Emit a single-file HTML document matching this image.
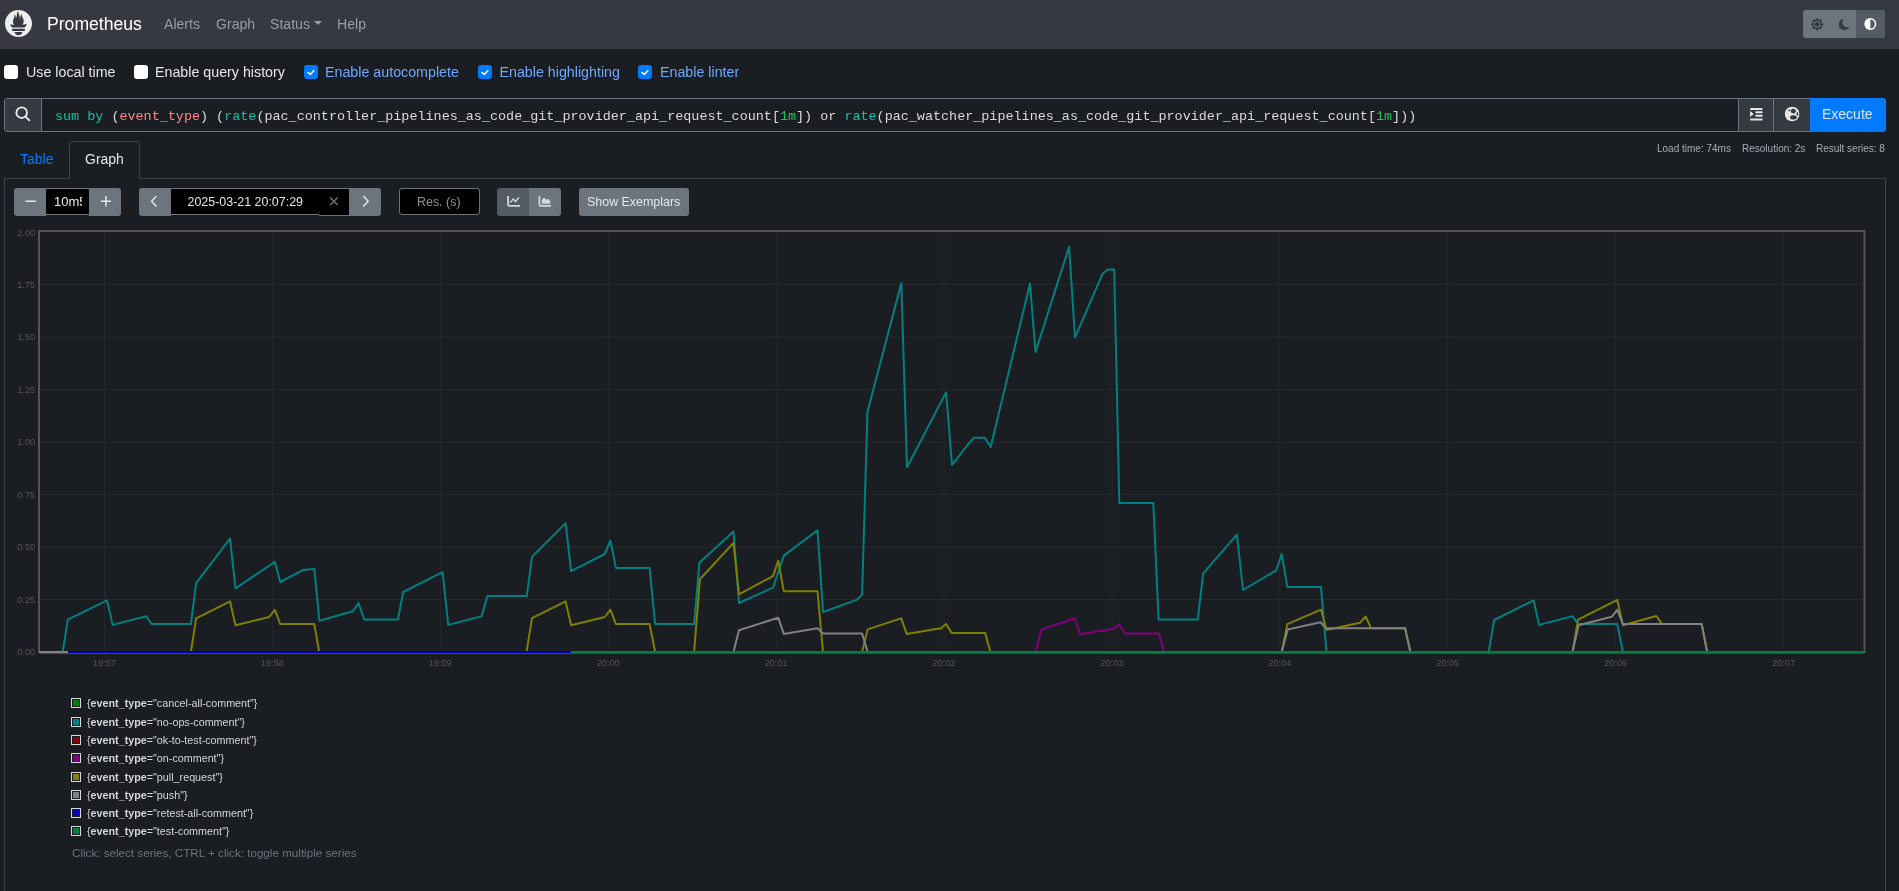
<!DOCTYPE html>
<html><head><meta charset="utf-8">
<style>
*{box-sizing:border-box;margin:0;padding:0}
html,body{width:1899px;height:891px;overflow:hidden}
body{will-change:transform;background:#1a1d21;font-family:"Liberation Sans",sans-serif;color:#e4e6e8;position:relative}
.abs{position:absolute}
#nav{left:0;top:0;width:1899px;height:49px;background:#363942}
.brand{left:47px;top:13px;font-size:17.6px;color:#fff;line-height:22px;white-space:nowrap}
.nl{top:15px;font-size:14.1px;line-height:18px;color:#9a9da1;white-space:nowrap}
.cb{width:14px;height:14px;border-radius:3px;background:#fff}
.cbc{background:#007bff}
.lbl{top:64px;font-size:14.25px;line-height:16px;white-space:nowrap;color:#e4e6e8}
.lblb{color:#6ea8fe}
.qbox{left:4px;top:98px;width:1882px;height:34px;border:1px solid #6c757d;border-radius:3px;overflow:hidden}
.qtext{left:55px;top:109px;font-family:"Liberation Mono",monospace;font-size:13.43px;line-height:16px;color:#dadada;white-space:pre}
.kw{color:#14bfad}.ln{color:#ff8585}.nm{color:#22c55e}
.tabtxt{top:151px;font-size:14px;line-height:16px;white-space:nowrap}
.stat{top:143px;font-size:10px;line-height:12px;color:#a6acb4;white-space:nowrap}
.btn{background:#6c757d;height:28px;top:188px}
.inp{background:#000;top:188px;height:27px;border:1px solid #6c757d}
.ctl{font-size:12.45px;line-height:14px;white-space:nowrap}
.yl{left:0;width:35px;text-align:right;font-size:9.1px;line-height:12px;color:#555}
.xl{top:657px;width:40px;text-align:center;font-size:9.1px;line-height:12px;color:#555}
.sw{left:71px;width:10px;height:10px;border:1px solid #d9d9d9;padding:1px;background:#1a1d21}
.sw div{width:6px;height:6px}
.lg{left:87px;font-size:10.75px;line-height:14px;color:#d4d6d8;white-space:nowrap}
.lg b{font-weight:bold}
</style></head>
<body>
<div id="nav" class="abs">
  <svg class="abs" style="left:5px;top:10px" width="27" height="27" viewBox="0 0 24 24">
    <path fill="#eeeeee" d="M12 0C5.373 0 0 5.372 0 12c0 6.627 5.373 12 12 12s12-5.373 12-12c0-6.628-5.373-12-12-12zm0 22.46c-1.885 0-3.414-1.26-3.414-2.814h6.828c0 1.553-1.528 2.813-3.414 2.813zm5.64-3.745H6.36v-2.046h11.28v2.046zm-.04-3.098H6.391c-.037-.043-.075-.086-.111-.13-1.155-1.401-1.427-2.133-1.69-2.879-.005-.025 1.4.287 2.395.511 0 0 .513.119 1.262.255-.72-.843-1.147-1.915-1.147-3.01 0-2.406 1.845-4.508 1.18-6.419.648.053 1.34 1.367 1.387 3.422.689-.951.977-2.69.977-3.755 0-1.103.727-2.385 1.454-2.429-.648 1.069.168 1.984.894 4.256.272.854.237 2.29.447 3.201.07-1.892.395-4.652 1.595-5.605-.529 1.2.079 2.702.494 3.424.671 1.164 1.078 2.047 1.078 3.716a4.642 4.642 0 01-1.11 2.996c.792-.149 1.34-.283 1.34-.283l2.573-.502s-.374 1.538-1.81 3.019z"/>
  </svg>
  <div class="abs brand">Prometheus</div>
  <div class="abs nl" style="left:164px">Alerts</div>
  <div class="abs nl" style="left:216px">Graph</div>
  <div class="abs nl" style="left:270px">Status</div>
  <div class="abs" style="left:314px;top:21px;width:0;height:0;border-left:4.1px solid transparent;border-right:4.1px solid transparent;border-top:4.2px solid #9a9da1"></div>
  <div class="abs nl" style="left:337px">Help</div>
  <div class="abs" style="left:1803px;top:10px;width:82px;height:28px;border-radius:3px;overflow:hidden;background:#6c757d">
    <div class="abs" style="left:53px;top:0;width:29px;height:28px;background:#545b62"></div>
    <svg class="abs" style="left:0;top:0" width="82" height="28" viewBox="0 0 82 28">
      <g fill="#343a40" transform="translate(14.2,14.3)">
        <polygon points="0,-6.6 1.8,-4.3 4.7,-4.7 4.3,-1.8 6.6,0 4.3,1.8 4.7,4.7 1.8,4.3 0,6.6 -1.8,4.3 -4.7,4.7 -4.3,1.8 -6.6,0 -4.3,-1.8 -4.7,-4.7 -1.8,-4.3"/>
        <circle r="3.4" fill="#6c757d"/><circle r="2.4" fill="#343a40"/>
      </g>
      <path fill="#343a40" d="M40.91,9.01 A5.4,5.4 0 1 0 46.18,16.50 A4.6,4.6 0 0 1 40.91,9.01 Z"/>
      <g transform="translate(67.3,14)">
        <circle r="6" fill="#fff"/><path d="M0,-4.6 A4.6,4.6 0 0 1 0,4.6 Z" fill="#545b62"/>
      </g>
    </svg>
  </div>
</div>

<div class="abs cb" style="left:4px;top:65px"></div>
<div class="abs lbl" style="left:26px">Use local time</div>
<div class="abs cb" style="left:134px;top:65px"></div>
<div class="abs lbl" style="left:155px">Enable query history</div>
<div class="abs cb cbc" style="left:304px;top:65px"></div>
<div class="abs lbl lblb" style="left:325px">Enable autocomplete</div>
<div class="abs cb cbc" style="left:478px;top:65px"></div>
<div class="abs lbl lblb" style="left:499.5px">Enable highlighting</div>
<div class="abs cb cbc" style="left:638px;top:65px"></div>
<div class="abs lbl lblb" style="left:660px">Enable linter</div>
<svg class="abs" style="left:0;top:60px" width="700" height="24" viewBox="0 60 700 24">
  <g fill="none" stroke="#fff" stroke-width="1.5" stroke-linecap="round" stroke-linejoin="round">
    <path d="M308,72.5 L310.3,74.4 L313.9,70.5"/>
    <path d="M482,72.5 L484.3,74.4 L487.9,70.5"/>
    <path d="M642,72.5 L644.3,74.4 L647.9,70.5"/>
  </g>
</svg>

<!-- query box -->
<div class="abs qbox">
  <div class="abs" style="left:0;top:0;width:37px;height:32px;background:#343a40;border-right:1px solid #6c757d"></div>
  <div class="abs" style="left:1733px;top:0;width:36px;height:32px;background:#343a40;border-left:1px solid #6c757d"></div>
  <div class="abs" style="left:1768px;top:0;width:37px;height:32px;background:#343a40;border-left:1px solid #6c757d"></div>
</div>
<div class="abs" style="left:1810px;top:98px;width:76px;height:34px;background:#007bff;border-radius:0 4px 4px 0"></div>
<div class="abs" style="left:1822px;top:106px;font-size:14px;line-height:16px;color:#dfe4ea">Execute</div>
<svg class="abs" style="left:0;top:95px" width="1899" height="40" viewBox="0 95 1899 40">
  <g fill="none" stroke="#e8eaec" stroke-width="1.9"><circle cx="21.7" cy="112.7" r="5.3"/><path d="M25.6,116.6 L29.3,120.3" stroke-linecap="round"/></g>
  <g fill="#e6e6e6">
    <rect x="1750" y="107.9" width="12.6" height="2" rx="1"/>
    <rect x="1755.2" y="111.2" width="7.6" height="2" rx="1"/>
    <rect x="1755.2" y="114.8" width="7.6" height="2" rx="1"/>
    <rect x="1750" y="118.6" width="12.6" height="2" rx="1"/>
    <polygon points="1750,111 1753.8,114.05 1750,117.1"/>
  </g>
  <g>
    <circle cx="1792.1" cy="114" r="7.3" fill="#e6e6e6"/>
    <ellipse cx="1793.4" cy="117.4" rx="3.3" ry="2.1" fill="#343a40"/>
    <polygon points="1790.6,110.2 1792.8,108.5 1795.4,109.4 1796.1,111.6 1794.2,113.6 1791.4,113.1" fill="#343a40"/>
    <circle cx="1789.4" cy="110.4" r="0.9" fill="#343a40"/>
    <ellipse cx="1797.4" cy="113.9" rx="0.9" ry="1.8" fill="#343a40"/>
  </g>
</svg>
<div class="abs qtext"><span class="kw">sum</span> <span class="kw">by</span> (<span class="ln">event_type</span>) (<span class="kw">rate</span>(pac_controller_pipelines_as_code_git_provider_api_request_count[<span class="nm">1m</span>]) or <span class="kw">rate</span>(pac_watcher_pipelines_as_code_git_provider_api_request_count[<span class="nm">1m</span>]))</div>

<!-- tabs -->
<div class="abs" style="left:4px;top:178px;width:1882px;height:720px;border:1px solid #3d4248;border-bottom:none"></div>
<div class="abs" style="left:69px;top:141px;width:71px;height:38px;border:1px solid #3d4248;border-bottom:none;border-radius:4px 4px 0 0;background:#1a1d21"></div>
<div class="abs tabtxt" style="left:20px;color:#007bff">Table</div>
<div class="abs tabtxt" style="left:85px;color:#e4e6e8">Graph</div>
<div class="abs stat" style="left:1657px">Load time: 74ms</div>
<div class="abs stat" style="left:1742px">Resolution: 2s</div>
<div class="abs stat" style="left:1816px">Result series: 8</div>

<!-- controls -->
<div class="abs btn" style="left:14px;width:32px;border-radius:3px 0 0 3px"></div>
<div class="abs" style="left:46px;top:188px;width:43px;height:27px;background:#000;border-top:1px solid #6c757d;border-bottom:1px solid #6c757d"></div>
<div class="abs" style="left:46px;top:188px;width:36px;height:27px;overflow:hidden"><div class="abs ctl" style="left:8px;top:7px;color:#eee;font-size:13px">10m53s</div></div>
<div class="abs btn" style="left:89px;width:32px;border-radius:0 3px 3px 0"></div>
<div class="abs btn" style="left:139px;width:32px;border-radius:3px 0 0 3px"></div>
<div class="abs" style="left:171px;top:188px;width:178px;height:27px;background:#000;border-top:1px solid #6c757d"></div>
<div class="abs" style="left:171px;top:214px;width:148px;height:1px;background:#6c757d"></div>
<div class="abs" style="left:319px;top:215px;width:30px;height:1px;background:#6c757d"></div>
<div class="abs btn" style="left:349px;width:32px;border-radius:0 3px 3px 0"></div>
<div class="abs ctl" style="left:187.5px;top:195px;color:#e4e6e8">2025-03-21 20:07:29</div>
<div class="abs inp" style="left:399px;width:81px;border-radius:3px"></div>
<div class="abs ctl" style="left:417px;top:195px;color:#8e9296">Res. (s)</div>
<div class="abs btn" style="left:497px;width:32px;border-radius:3px 0 0 3px;background:#545b62"></div>
<div class="abs btn" style="left:529px;width:32px;border-radius:0 3px 3px 0"></div>
<div class="abs btn" style="left:579px;width:110px;border-radius:3px"></div>
<div class="abs ctl" style="left:587px;top:195px;color:#e4e6e8">Show Exemplars</div>
<svg class="abs" style="left:0;top:185px" width="700" height="34" viewBox="0 185 700 34">
  <g stroke="#e6e6e6" stroke-width="1.5" fill="none">
    <path d="M25.5,201.2 H35.8"/>
    <path d="M100.8,201.2 H111 M105.9,196 V206.4"/>
    <path d="M156.4,195.9 L151.6,201.2 L156.4,206.5" />
    <path d="M363.3,195.9 L368.1,201.2 L363.3,206.5" />
    <path d="M330.2,197.6 L337.6,205 M337.6,197.6 L330.2,205" stroke="#6c757d" stroke-width="1.4"/>
    <path d="M508.1,196 V204.6 q0,1.3 1.3,1.3 H520" stroke-width="1.8" stroke="#d3d6da"/>
    <path d="M510.1,202.6 L513.4,198.9 L515.3,201.6 L519,197.6" stroke-width="1.4" stroke="#d3d6da"/>
    <path d="M539.4,196 V204.6 q0,1.3 1.3,1.3 H551" stroke-width="1.8" stroke="#d3d6da"/>
  </g>
  <path fill="#d3d6da" d="M541.8,203.8 V200.3 Q542.5,198.5 543.9,197.8 Q545,198.3 546.3,199.8 Q547.3,198.8 548.2,198.9 Q549.8,199.7 550.3,201.2 V203.8 Z"/>
</svg>

<svg class="abs" style="left:0;top:0" width="1899" height="891" viewBox="0 0 1899 891">
<line x1="104.5" y1="232" x2="104.5" y2="651" stroke="#26292d" stroke-width="1"/>
<line x1="272.4" y1="232" x2="272.4" y2="651" stroke="#26292d" stroke-width="1"/>
<line x1="440.3" y1="232" x2="440.3" y2="651" stroke="#26292d" stroke-width="1"/>
<line x1="608.2" y1="232" x2="608.2" y2="651" stroke="#26292d" stroke-width="1"/>
<line x1="776.1" y1="232" x2="776.1" y2="651" stroke="#26292d" stroke-width="1"/>
<line x1="944.0" y1="232" x2="944.0" y2="651" stroke="#26292d" stroke-width="1"/>
<line x1="1112.0" y1="232" x2="1112.0" y2="651" stroke="#26292d" stroke-width="1"/>
<line x1="1279.9" y1="232" x2="1279.9" y2="651" stroke="#26292d" stroke-width="1"/>
<line x1="1447.8" y1="232" x2="1447.8" y2="651" stroke="#26292d" stroke-width="1"/>
<line x1="1615.7" y1="232" x2="1615.7" y2="651" stroke="#26292d" stroke-width="1"/>
<line x1="1783.6" y1="232" x2="1783.6" y2="651" stroke="#26292d" stroke-width="1"/>
<line x1="40" y1="599.6" x2="1863" y2="599.6" stroke="#26292d" stroke-width="1"/>
<line x1="40" y1="547.1" x2="1863" y2="547.1" stroke="#26292d" stroke-width="1"/>
<line x1="40" y1="494.6" x2="1863" y2="494.6" stroke="#26292d" stroke-width="1"/>
<line x1="40" y1="442.1" x2="1863" y2="442.1" stroke="#26292d" stroke-width="1"/>
<line x1="40" y1="389.6" x2="1863" y2="389.6" stroke="#26292d" stroke-width="1"/>
<line x1="40" y1="337.1" x2="1863" y2="337.1" stroke="#26292d" stroke-width="1"/>
<line x1="40" y1="284.6" x2="1863" y2="284.6" stroke="#26292d" stroke-width="1"/>
<rect x="39" y="231" width="1825.5" height="421" fill="none" stroke="#545454" stroke-width="2"/>
<line x1="40" y1="653.5" x2="1864" y2="653.5" stroke="#4a4548" stroke-width="1"/>
<polyline points="39.0,652.0 62.7,652.0 67.8,619.6 107.0,600.3 112.6,624.9 146.1,616.2 151.7,624.1 190.9,624.1 196.1,583.2 230.0,538.6 235.5,588.3 274.8,561.9 280.3,582.0 302.8,570.1 314.3,569.0 319.4,620.7 352.9,611.3 358.5,603.0 364.3,619.6 397.9,619.6 403.2,592.0 442.6,572.2 448.2,624.9 481.7,616.2 487.3,595.9 526.8,595.9 532.0,556.8 565.6,523.1 571.1,571.1 604.8,554.0 610.4,540.5 615.9,567.9 649.6,567.9 655.1,624.1 694.1,624.1 699.4,562.7 733.5,531.5 739.0,603.0 773.0,587.7 783.8,555.6 817.5,530.2 823.0,612.0 856.6,599.9 862.1,594.8 867.4,412.1 901.3,283.0 907.0,467.3 946.1,392.4 952.0,464.8 968.8,443.3 973.9,437.7 984.8,437.7 990.7,447.1 1030.0,283.5 1035.5,352.1 1069.1,246.8 1075.0,337.3 1102.4,274.1 1107.8,269.5 1114.2,269.5 1119.3,503.1 1153.3,503.1 1158.6,619.6 1197.7,619.6 1203.2,573.4 1236.9,534.7 1243.0,590.0 1276.2,570.3 1281.7,554.0 1287.3,586.9 1321.0,586.9 1326.5,652.0 1488.7,652.0 1494.2,620.0 1533.6,600.3 1539.0,624.9 1572.5,616.2 1578.1,624.1 1617.3,624.1 1622.9,652.0 1864.5,652.0" stroke="#008080" fill="none" stroke-width="2" stroke-linejoin="round" stroke-linecap="butt"/>
<polyline points="39.0,652.0 1035.8,652.0 1041.4,629.4 1074.6,618.5 1080.1,634.2 1113.8,628.7 1119.4,624.4 1124.9,633.4 1158.9,633.4 1164.0,652.0 1864.5,652.0" stroke="#800080" fill="none" stroke-width="2" stroke-linejoin="round" stroke-linecap="butt"/>
<polyline points="39.0,652.0 190.9,652.0 196.1,618.4 230.0,601.4 235.5,625.2 269.2,617.0 274.8,609.8 280.3,624.1 314.3,624.1 319.1,652.0 526.5,652.0 532.0,618.1 565.6,601.4 571.1,625.2 604.8,617.0 610.4,609.7 615.9,624.1 649.6,624.1 655.1,652.0 694.1,652.0 699.9,579.3 733.5,542.9 739.0,594.3 773.0,576.1 778.2,560.8 783.8,591.2 817.5,591.2 823.0,652.0 862.1,652.0 867.6,629.4 901.2,618.4 906.7,633.9 939.0,628.5 940.5,628.7 946.1,623.9 951.7,633.1 985.2,633.1 990.4,652.0 1281.7,652.0 1287.3,624.1 1321.0,609.7 1326.5,629.9 1360.0,622.8 1365.6,616.5 1371.1,628.3 1405.1,628.3 1410.4,652.0 1572.5,652.0 1578.1,619.6 1617.3,599.9 1622.9,625.2 1656.4,616.0 1662.0,624.1 1701.7,624.1 1707.2,652.0 1864.5,652.0" stroke="#808000" fill="none" stroke-width="2" stroke-linejoin="round" stroke-linecap="butt"/>
<polyline points="39.0,652.0 733.5,652.0 739.0,630.2 778.2,617.7 783.8,633.9 817.5,628.3 823.0,633.4 862.1,633.4 867.6,652.0 1281.7,652.0 1287.7,629.4 1320.5,622.3 1326.0,628.3 1405.1,628.3 1410.4,652.0 1572.5,652.0 1578.6,625.2 1611.8,616.8 1617.3,609.7 1622.9,624.1 1701.7,624.1 1707.2,652.0 1864.5,652.0" stroke="#808080" fill="none" stroke-width="2" stroke-linejoin="round" stroke-linecap="butt"/>
<line x1="40" y1="651.5" x2="68" y2="651.5" stroke="#86866c" stroke-width="1"/>
<line x1="40" y1="653.5" x2="68" y2="653.5" stroke="#3d5252" stroke-width="1"/>
<polyline points="68.0,652.0 571.1,652.0" stroke="#0000c0" fill="none" stroke-width="2" stroke-linejoin="round" stroke-linecap="butt"/>
<polyline points="571.1,652.0 1864.5,652.0" stroke="#008040" fill="none" stroke-width="2" stroke-linejoin="round" stroke-linecap="butt"/>
</svg>
<div class="abs yl" style="top:646.0px">0.00</div>
<div class="abs yl" style="top:593.6px">0.25</div>
<div class="abs yl" style="top:541.1px">0.50</div>
<div class="abs yl" style="top:488.7px">0.75</div>
<div class="abs yl" style="top:436.2px">1.00</div>
<div class="abs yl" style="top:383.8px">1.25</div>
<div class="abs yl" style="top:331.4px">1.50</div>
<div class="abs yl" style="top:278.9px">1.75</div>
<div class="abs yl" style="top:226.5px">2.00</div>
<div class="abs xl" style="left:84.5px">19:57</div>
<div class="abs xl" style="left:252.4px">19:58</div>
<div class="abs xl" style="left:420.3px">19:59</div>
<div class="abs xl" style="left:588.2px">20:00</div>
<div class="abs xl" style="left:756.1px">20:01</div>
<div class="abs xl" style="left:924.0px">20:02</div>
<div class="abs xl" style="left:1092.0px">20:03</div>
<div class="abs xl" style="left:1259.9px">20:04</div>
<div class="abs xl" style="left:1427.8px">20:05</div>
<div class="abs xl" style="left:1595.7px">20:06</div>
<div class="abs xl" style="left:1763.6px">20:07</div>
<div class="abs sw" style="top:698.1px"><div style="background:#008000"></div></div>
<div class="abs lg" style="top:696.1px">{<b>event_type</b>="cancel-all-comment"}</div>
<div class="abs sw" style="top:717.3px"><div style="background:#008080"></div></div>
<div class="abs lg" style="top:715.3px">{<b>event_type</b>="no-ops-comment"}</div>
<div class="abs sw" style="top:735.1px"><div style="background:#800000"></div></div>
<div class="abs lg" style="top:733.1px">{<b>event_type</b>="ok-to-test-comment"}</div>
<div class="abs sw" style="top:753.3px"><div style="background:#800080"></div></div>
<div class="abs lg" style="top:751.3px">{<b>event_type</b>="on-comment"}</div>
<div class="abs sw" style="top:771.5px"><div style="background:#808000"></div></div>
<div class="abs lg" style="top:769.5px">{<b>event_type</b>="pull_request"}</div>
<div class="abs sw" style="top:790.0px"><div style="background:#808080"></div></div>
<div class="abs lg" style="top:788.0px">{<b>event_type</b>="push"}</div>
<div class="abs sw" style="top:808.2px"><div style="background:#0000c0"></div></div>
<div class="abs lg" style="top:806.2px">{<b>event_type</b>="retest-all-comment"}</div>
<div class="abs sw" style="top:826.0px"><div style="background:#008040"></div></div>
<div class="abs lg" style="top:824.0px">{<b>event_type</b>="test-comment"}</div>
<div class="abs" style="left:72px;top:846px;font-size:11.65px;line-height:14px;color:#6c757d;white-space:nowrap">Click: select series, CTRL + click: toggle multiple series</div>
</body></html>
